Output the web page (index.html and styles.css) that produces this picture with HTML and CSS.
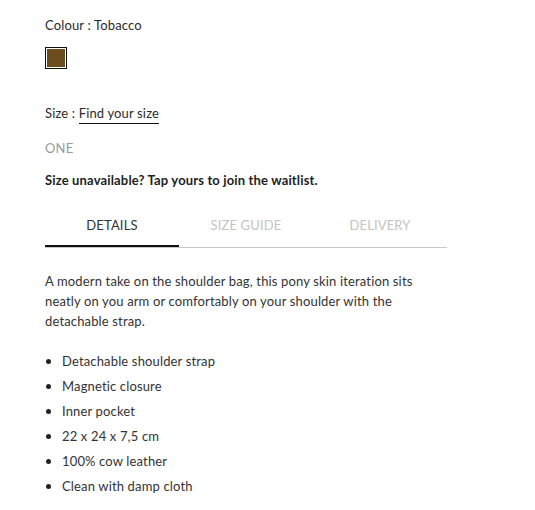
FILE: index.html
```html
<!DOCTYPE html>
<html>
<head>
<meta charset="utf-8">
<link rel="stylesheet" href="styles.css">
</head>
<body>
<div class="product">
  <div class="label">Colour : Tobacco</div>
  <div class="swatches"><span class="swatch"></span></div>
  <div class="label size-label">Size : <a class="find">Find your size</a></div>
  <div class="size-one">ONE</div>
  <div class="waitlist">Size unavailable? Tap yours to join the waitlist.</div>
  <div class="tabs">
    <div class="tab active">DETAILS</div>
    <div class="tab">SIZE GUIDE</div>
    <div class="tab">DELIVERY</div>
  </div>
  <p class="desc">A modern take on the shoulder bag, this pony skin iteration sits neatly on you arm or comfortably on your shoulder with the detachable strap.</p>
  <ul class="features">
    <li>Detachable shoulder strap</li>
    <li>Magnetic closure</li>
    <li>Inner pocket</li>
    <li>22 x 24 x 7,5 cm</li>
    <li>100% cow leather</li>
    <li>Clean with damp cloth</li>
  </ul>
</div>
</body>
</html>
```
FILE: styles.css
```css
html, body { margin: 0; padding: 0; background: #fff; }
body {
  font-family: "Lato", "Noto Sans", sans-serif;
  font-size: 13px;
  letter-spacing: 0.15px;
  color: #2b2b2b;
}
.product { padding: 16px 0 0 45px; width: 402px; }
.label { line-height: 18px; height: 18px; }
.swatches { margin-top: 13px; height: 22px; }
.swatch {
  display: block; width: 20px; height: 20px;
  border: 1px solid #111; box-shadow: inset 0 0 0 1px #fff;
  background: #6b4d1e;
}
.size-label { margin-top: 35px; }
.find { color: #2b2b2b; border-bottom: 1px solid #111; padding-bottom: 2px; }
.size-one { margin-top: 17px; color: #9a9a9a; line-height: 18px; }
.waitlist { margin-top: 14px; font-weight: 700; line-height: 18px; color: #1e1e1e; }
.tabs { display: flex; margin-top: 26px; border-bottom: 1px solid #c8c8c8; }
.tab {
  flex: 1; text-align: center; color: #c4c4c4; font-size: 13px;
  height: 32px; line-height: 18px; box-sizing: border-box; padding-top: 1px;
}
.tab.active { color: #333; border-bottom: 2px solid #111; margin-bottom: -1px; }
.desc { margin: 23px 0 0; line-height: 20px; width: 380px; color: #333; }
.features { list-style: none; margin: 20px 0 0; padding: 0; }
.features li { position: relative; padding-left: 17px; height: 25px; line-height: 20px; color: #333; }
.features li::before {
  content: ""; position: absolute; left: 1px; top: 8px;
  width: 5px; height: 5px; border-radius: 50%; background: #222;
}
```
